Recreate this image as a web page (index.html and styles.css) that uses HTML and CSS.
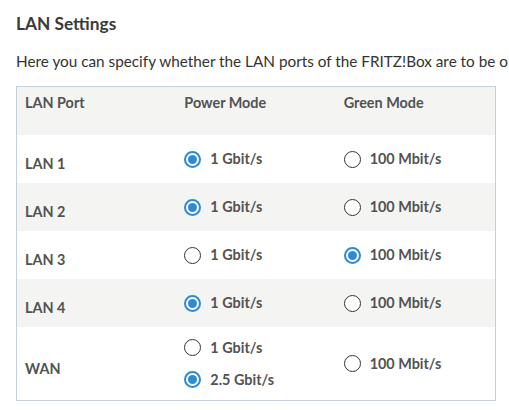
FILE: index.html
```html
<!DOCTYPE html>
<html>
<head>
<meta charset="utf-8">
<link rel="stylesheet" href="styles.css">
</head>
<body>
<h2 class="title">LAN Settings</h2>
<p class="intro">Here you can specify whether the LAN ports of the FRITZ!Box are to be o</p>
<table class="ports">
  <thead>
    <tr class="head"><th>LAN Port</th><th>Power Mode</th><th>Green Mode</th></tr>
  </thead>
  <tbody>
    <tr><td class="port">LAN 1</td><td><span class="opt"><span class="radio on"></span>1 Gbit/s</span></td><td><span class="opt"><span class="radio"></span>100 Mbit/s</span></td></tr>
    <tr class="alt"><td class="port">LAN 2</td><td><span class="opt"><span class="radio on"></span>1 Gbit/s</span></td><td><span class="opt"><span class="radio"></span>100 Mbit/s</span></td></tr>
    <tr><td class="port">LAN 3</td><td><span class="opt"><span class="radio"></span>1 Gbit/s</span></td><td><span class="opt"><span class="radio on"></span>100 Mbit/s</span></td></tr>
    <tr class="alt"><td class="port">LAN 4</td><td><span class="opt"><span class="radio on"></span>1 Gbit/s</span></td><td><span class="opt"><span class="radio"></span>100 Mbit/s</span></td></tr>
    <tr class="wan"><td class="port">WAN</td><td><div class="stack"><span class="opt"><span class="radio"></span>1 Gbit/s</span><span class="opt"><span class="radio on"></span>2.5 Gbit/s</span></div></td><td><span class="opt"><span class="radio"></span>100 Mbit/s</span></td></tr>
  </tbody>
</table>
</body>
</html>
```
FILE: styles.css
```css
html, body {
  margin: 0;
  padding: 0;
  background: #ffffff;
  overflow: hidden;
}
body {
  font-family: "Lato", "Liberation Sans", sans-serif;
  color: #333333;
  padding: 13px 0 0 16px;
}
.title {
  margin: 0;
  font-size: 17.3px;
  line-height: 22px;
  font-weight: 700;
  color: #3a3a3a;
}
.intro {
  margin: 16px 0 0 0;
  font-size: 15.3px;
  line-height: 20px;
  white-space: nowrap;
  color: #333333;
}
.ports {
  margin-top: 15px;
  width: 480px;
  border-collapse: collapse;
  border: 1px solid #c3cfd9;
  table-layout: fixed;
  font-size: 14.4px;
  font-weight: 700;
  color: #525252;
}
.ports th {
  text-align: left;
  font-weight: 700;
  vertical-align: top;
  padding: 8px 8px 0 8px;
  height: 40px;
  background: #f4f4f2;
  line-height: 16px;
  width: 33.33%;
}
.ports td {
  padding: 0 8px;
  height: 48px;
  vertical-align: middle;
  line-height: 18px;
}
.ports td.port {
  padding-top: 10px;
  height: 38px;
}
.ports tr.alt td {
  background: #f4f4f2;
}
.ports tr.wan td {
  height: 73px;
}
.ports tr.wan td.port {
  height: 63px;
}
.opt {
  display: flex;
  align-items: center;
  gap: 9px;
}
.stack {
  display: flex;
  flex-direction: column;
  gap: 14px;
}
.radio {
  box-sizing: border-box;
  width: 17px;
  height: 17px;
  border-radius: 50%;
  border: 1.5px solid #333333;
  background: #ffffff;
  flex: none;
  position: relative;
}
.radio.on {
  border: 2px solid #2a8ae0;
}
.radio.on::after {
  content: "";
  position: absolute;
  left: 2px;
  top: 2px;
  width: 9px;
  height: 9px;
  border-radius: 50%;
  background: #2a8ae0;
}
```
